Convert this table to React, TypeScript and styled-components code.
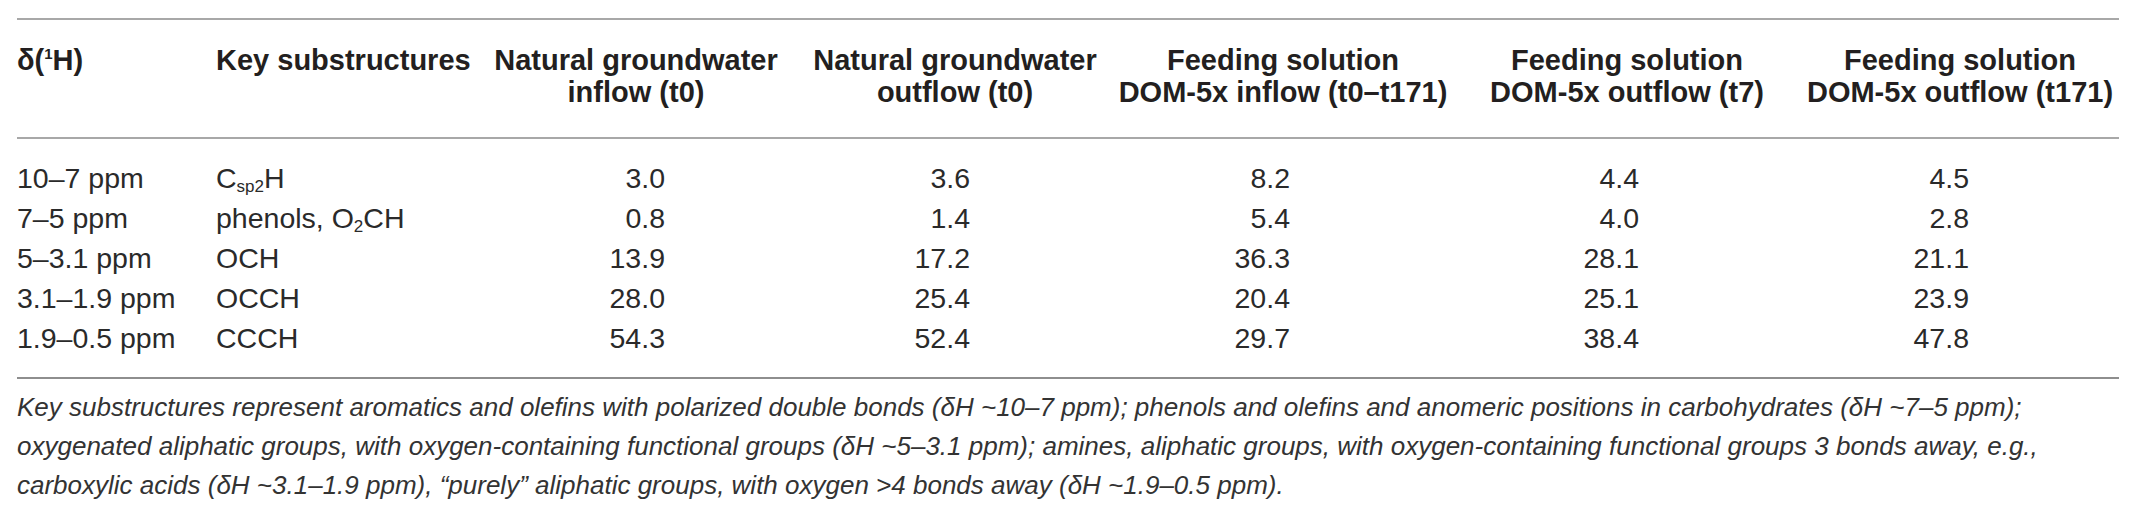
import React from 'react';
import styled, { createGlobalStyle } from 'styled-components';

const GlobalStyle = createGlobalStyle`
  html, body {
    margin: 0;
    padding: 0;
    background: #ffffff;
  }
  body {
    font-family: "Liberation Sans", Arial, sans-serif;
    color: #222222;
  }
`;

const Page = styled.div`
  width: 2102px;
  padding: 18px 0 0 17px;
`;

const Table = styled.table`
  width: 2102px;
  table-layout: fixed;
  border-collapse: collapse;
  border-top: 2px solid #a8a8a8;
  border-bottom: 2px solid #8e8e8e;
`;

const HeadCell = styled.th<{ $numeric: boolean }>`
  padding: 24px 0 29px 0;
  border-bottom: 2px solid #a8a8a8;
  font-size: 29px;
  line-height: 32px;
  font-weight: 700;
  color: #231f20;
  text-align: ${({ $numeric }) => ($numeric ? 'center' : 'left')};
  vertical-align: top;
  white-space: nowrap;
`;

const Row = styled.tr`
  &:first-child td {
    padding-top: 19px;
  }
  &:last-child td {
    padding-bottom: 19px;
  }
`;

const Cell = styled.td`
  padding: 0;
  font-size: 28.5px;
  line-height: 40px;
  color: #2a2a2a;
  text-align: left;
  white-space: nowrap;
`;

const NumCell = styled(Cell)<{ $pad: number }>`
  text-align: right;
  padding-right: ${({ $pad }) => $pad}px;
`;

const Sup = styled.sup`
  font-size: 15px;
  line-height: 0;
  vertical-align: 11px;
`;

const Sub = styled.sub`
  font-size: 17px;
  line-height: 0;
  vertical-align: -4px;
`;

const Footnote = styled.p`
  margin: 9px 0 0 0;
  font-size: 26px;
  line-height: 39px;
  font-style: italic;
  color: #333333;
  white-space: nowrap;
`;

interface ColumnType {
  width: number;
  pad: number;
  title: React.ReactNode;
}

const columns: ColumnType[] = [
  { width: 199, pad: 0, title: <>δ(<Sup>1</Sup>H)</> },
  { width: 259, pad: 0, title: 'Key substructures' },
  { width: 322, pad: 132, title: <>Natural groundwater<br />inflow (t0)</> },
  { width: 316, pad: 143, title: <>Natural groundwater<br />outflow (t0)</> },
  { width: 340, pad: 163, title: <>Feeding solution<br />DOM-5x inflow (t0–t171)</> },
  { width: 348, pad: 162, title: <>Feeding solution<br />DOM-5x outflow (t7)</> },
  { width: 318, pad: 150, title: <>Feeding solution<br />DOM-5x outflow (t171)</> },
];

const rows = [
  { shift: '10–7 ppm', sub: <>C<Sub>sp2</Sub>H</>, values: ['3.0', '3.6', '8.2', '4.4', '4.5'] },
  { shift: '7–5 ppm', sub: <>phenols, O<Sub>2</Sub>CH</>, values: ['0.8', '1.4', '5.4', '4.0', '2.8'] },
  { shift: '5–3.1 ppm', sub: 'OCH', values: ['13.9', '17.2', '36.3', '28.1', '21.1'] },
  { shift: '3.1–1.9 ppm', sub: 'OCCH', values: ['28.0', '25.4', '20.4', '25.1', '23.9'] },
  { shift: '1.9–0.5 ppm', sub: 'CCCH', values: ['54.3', '52.4', '29.7', '38.4', '47.8'] },
];

export default function App() {
  return (
    <Page>
      <GlobalStyle />
      <Table>
        <colgroup>
          {columns.map((col, index) => (
            <col key={index} style={{ width: col.width }} />
          ))}
        </colgroup>
        <thead>
          <tr>
            {columns.map((col, index) => (
              <HeadCell key={index} $numeric={index > 1}>
                {col.title}
              </HeadCell>
            ))}
          </tr>
        </thead>
        <tbody>
          {rows.map((row) => (
            <Row key={row.shift}>
              <Cell>{row.shift}</Cell>
              <Cell>{row.sub}</Cell>
              {row.values.map((value, index) => (
                <NumCell key={index} $pad={columns[index + 2].pad}>
                  {value}
                </NumCell>
              ))}
            </Row>
          ))}
        </tbody>
      </Table>
      <Footnote>
        Key substructures represent aromatics and olefins with polarized double bonds (δH ~10–7 ppm);
        phenols and olefins and anomeric positions in carbohydrates (δH ~7–5 ppm);
        <br />
        oxygenated aliphatic groups, with oxygen-containing functional groups (δH ~5–3.1 ppm); amines,
        aliphatic groups, with oxygen-containing functional groups 3 bonds away, e.g.,
        <br />
        carboxylic acids (δH ~3.1–1.9 ppm), “purely” aliphatic groups, with oxygen &gt;4 bonds away (δH
        ~1.9–0.5 ppm).
      </Footnote>
    </Page>
  );
}
